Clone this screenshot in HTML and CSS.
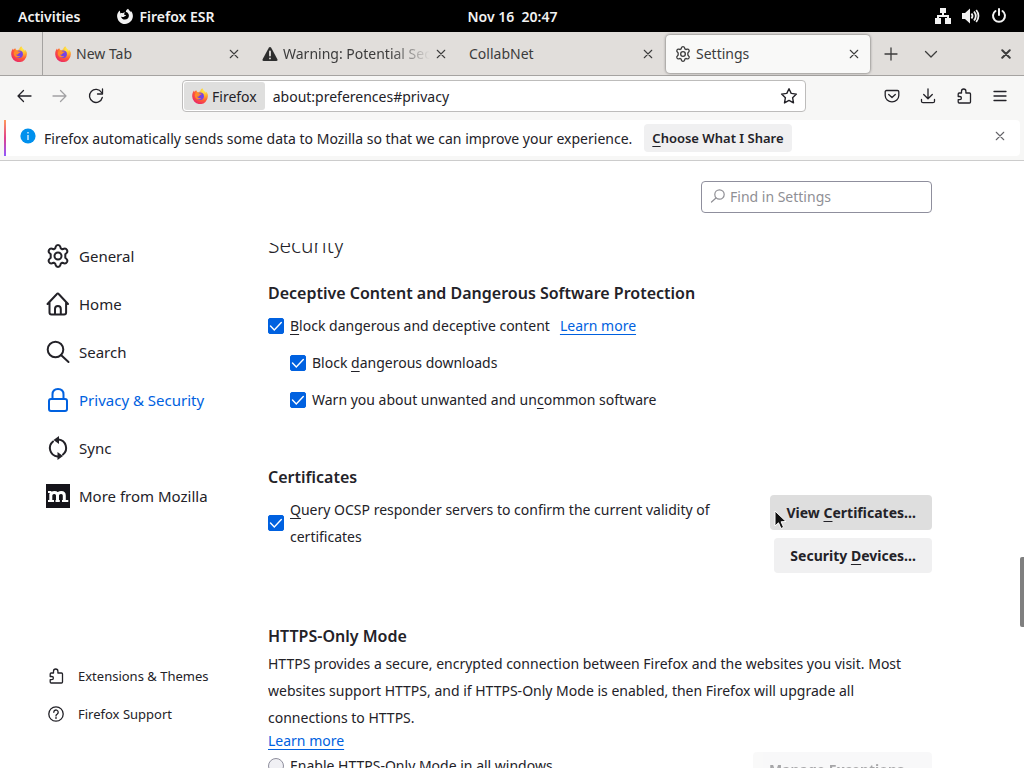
FILE: index.html
```
<!doctype html>
<html lang="en">
  <head>
    <title>Settings</title>
    <meta charset="utf-8">
    <link rel="stylesheet" href="styles.css">
  </head>

  <body>
    <!-- shared icons -->
    <svg class="defs" width="0" height="0" aria-hidden="true">
      <defs>
        <radialGradient id="flame" cx="75%" cy="15%" r="95%">
          <stop offset="0" stop-color="#fff04a"/>
          <stop offset="0.35" stop-color="#ffb32e"/>
          <stop offset="0.65" stop-color="#ff5a36"/>
          <stop offset="1" stop-color="#e8246b"/>
        </radialGradient>
        <symbol id="firefox" viewBox="0 0 16 16">
          <path fill="url(#flame)" d="M15.7 6.3c-.4-1.3-1.2-2.5-2.2-2.9.5.9.7 1.6.8 2.2C13.300 3.500 11.400 2.400 10.300.2c-1.300.8-2 2-2.100 3.300-.8.1-1.500.3-2.100.7-.8-.2-1.500-1-1.800-2-1 .5-1.500 1.200-2 1.900l-.3-1.500C.8 3.900.2 6.200.2 8.200a7.800 7.800 0 0 0 15.600.2c.1-.7 0-1.400-.1-2.100z"/>
          <circle cx="8.200" cy="8.300" r="3.700" fill="#7542e5"/>
          <path fill="#ff8a2b" d="M3.400 5.400c1.300-1 3-.8 4.200.1l2.200.3c-.1.800-1 1-1.700 1.200-.6.300-.7.700-1 1.200-.5.600-1.500.5-2 .3.600 1.500 2.300 2 4.100 1.400-1.200 2.500-5.900 1.700-6.400-1.900-.1-1 .1-1.900.6-2.600z"/>
        </symbol>
        <symbol id="close" viewBox="0 0 12 12">
          <path d="M1.500 1.500l9 9M10.500 1.500l-9 9"/>
        </symbol>
        <symbol id="gear" viewBox="0 0 24 24">
          <path d="M9.600 2.900C10 1.400 10.800 1 12 1s2 .4 2.400 1.900l.4 1.500 1.500.9 1.700-.6c1.500-.4 2.300.1 3 1.300.6 1.200.6 2.100-.5 3.100L19.300 10.300v3.400l1.200 1.200c1.100 1 1.100 1.900.5 3.100-.7 1.200-1.500 1.700-3 1.300l-1.700-.6-1.500.9-.4 1.500C14 22.600 13.200 23 12 23s-2-.4-2.400-1.900l-.4-1.500-1.500-.9-1.700.6c-1.500.4-2.300-.1-3-1.300-.6-1.200-.6-2.100.5-3.100l1.200-1.200v-3.400L3.500 9.100C2.400 8.100 2.400 7.200 3 6c.7-1.200 1.500-1.700 3-1.300l1.700.6 1.500-.9z"/>
          <circle cx="12" cy="12" r="3.500"/>
        </symbol>
        <symbol id="puzzle" viewBox="0 0 16 16">
          <path d="M2.200 8V6c0-.6.400-1 1-1h2.300V3.200a2.200 2.200 0 0 1 4.400 0V5h3.600c.6 0 1 .4 1 1v8c0 .6-.4 1-1 1H3.200c-.6 0-1-.4-1-1v-2.300h1.600a1.600 1.600 0 0 0 0-3.200H2.200z"/>
        </symbol>
      </defs>
    </svg>

    <header class="topbar">
      <div class="topbar-left">
        <span>Activities</span>
        <span class="app-name">
          <svg width="16" height="16" viewBox="0 0 16 16"><path fill="#f2f2f2" d="M14.900 4.300l-1.200-1.500.2 1.500L11 .7C9.500 1.500 8.700 2.700 8.900 4c1.600.2 3 1.600 3 3.700 0 2.300-1.700 3.900-3.900 3.900-2.100 0-3.700-1.300-4-3.200 1.100.8 2.400.8 3.300.1.500-.5 1-.6 1.600-.6 0-1-.8-1.400-2-1.500.2-.9.700-1.400 1.400-1.800-1.200-.2-2.100 0-2.800.6-.7-.2-1.500-.1-2.100.2L2.800 2.400C.9 4 0 6 .1 8.200.3 12.600 3.700 16 8 16s7.900-3.500 7.900-7.900c0-1.400-.4-2.700-1-3.800z"/></svg>
          Firefox ESR
        </span>
      </div>
      <span class="clock">Nov 16&nbsp; 20:47</span>
      <div class="topbar-right">
        <svg width="16" height="16" viewBox="0 0 16 16" fill="#f2f2f2"><path d="M5 0h6v5H9v2h5v3h2v6h-6v-6h2V9H4v1h2v6H0v-6h2V7h5V5H5z"/></svg>
        <svg width="18" height="16" viewBox="0 0 18 16"><path fill="#f2f2f2" d="M0 5h3l5-4.500v15L3 11H0z"/><path fill="none" stroke="#f2f2f2" stroke-width="1.800" d="M9.500 5.500c1.200 1.500 1.200 3.500 0 5M12 3.500c2.200 2.700 2.200 6.300 0 9M14.200 2c3 3.500 3 8.500 0 12"/></svg>
        <svg width="16" height="16" viewBox="0 0 16 16" fill="none" stroke="#f2f2f2" stroke-width="2" stroke-linecap="round"><path d="M8 1v6M4.500 3a6 6 0 1 0 7 0"/></svg>
      </div>
    </header>

    <div class="tabbar">
      <div class="pinned"><svg width="16" height="16"><use href="#firefox"/></svg></div>
      <div class="tab">
        <svg width="16" height="16"><use href="#firefox"/></svg>
        <span class="tab-title">New Tab</span>
        <button class="tab-close" aria-label="Close tab"><svg class="line" width="10" height="10"><use href="#close"/></svg></button>
      </div>
      <div class="tab">
        <svg width="16" height="16" viewBox="0 0 16 16"><path fill="#2e2e2e" d="M8 1c.5 0 .9.300 1.200.8l6.200 11.500c.5 1-.1 1.700-1 1.700H1.600c-.9 0-1.500-.7-1-1.700L6.800 1.800C7.100 1.300 7.500 1 8 1z"/><path stroke="#e2dfdc" stroke-width="1.800" stroke-linecap="round" d="M8 5.500v4M8 12.300v.1"/></svg>
        <span class="tab-title fade">Warning: Potential Secu</span>
        <button class="tab-close" aria-label="Close tab"><svg class="line" width="10" height="10"><use href="#close"/></svg></button>
      </div>
      <div class="tab">
        <span class="tab-title">CollabNet</span>
        <button class="tab-close" aria-label="Close tab"><svg class="line" width="10" height="10"><use href="#close"/></svg></button>
      </div>
      <div class="tab active">
        <svg class="line bold" width="16" height="16"><use href="#gear"/></svg>
        <span class="tab-title">Settings</span>
        <button class="tab-close" aria-label="Close tab"><svg class="line" width="10" height="10"><use href="#close"/></svg></button>
      </div>
      <div class="tab-tools">
        <button class="tool" aria-label="New tab"><svg class="line" width="14" height="14" viewBox="0 0 14 14"><path d="M7 1v12M1 7h12"/></svg></button>
        <button class="tool" aria-label="List all tabs"><svg class="line" width="14" height="14" viewBox="0 0 14 14"><path d="M1.500 4.500L7 10l5.500-5.500"/></svg></button>
      </div>
      <button class="window-close" aria-label="Close window"><svg class="line heavy" width="10" height="10"><use href="#close"/></svg></button>
    </div>

    <div class="navbar">
      <div class="nav-buttons">
        <button class="tool" aria-label="Back"><svg class="line" width="16" height="16" viewBox="0 0 16 16"><path d="M15 8H2M7.500 2.500L2 8l5.500 5.500"/></svg></button>
        <button class="tool" aria-label="Forward" disabled><svg class="line" width="16" height="16" viewBox="0 0 16 16"><path d="M1 8h13M8.500 2.500L14 8l-5.500 5.500"/></svg></button>
        <button class="tool" aria-label="Reload"><svg class="line" width="16" height="16" viewBox="0 0 16 16"><path d="M14.300 9.500A6.500 6.500 0 1 1 13.500 4.500M14.500 1v5h-5"/></svg></button>
      </div>
      <div class="urlbar">
        <span class="identity"><svg width="16" height="16"><use href="#firefox"/></svg>Firefox</span>
        <input class="url" type="text" aria-label="Address" value="about:preferences#privacy">
        <button class="star" aria-label="Bookmark this page"><svg class="line" width="18" height="18" viewBox="0 0 18 18"><path stroke-width="1.400" d="M9 1.700l2.200 4.700 5.200.7-3.800 3.600.9 5.200L9 13.400l-4.500 2.500.9-5.200L1.600 7.100l5.200-.7z"/></svg></button>
      </div>
      <div class="nav-tools">
        <button class="tool" aria-label="Pocket"><svg class="line" width="16" height="16" viewBox="0 0 16 16"><path d="M2.500 2.500h11c.8 0 1.300.5 1.300 1.300V7.500a6.800 6.300 0 0 1-13.600 0V3.800c0-.8.5-1.300 1.300-1.300zM4.700 6.500L8 9.500l3.300-3"/></svg></button>
        <button class="tool" aria-label="Downloads"><svg class="line" width="16" height="16" viewBox="0 0 16 16"><path d="M8 .8v9.700M3.700 6.500L8 10.700l4.300-4.200M1.500 11.500v1.700c0 1 .6 1.500 1.500 1.500h10c.9 0 1.500-.5 1.500-1.500v-1.700"/></svg></button>
        <button class="tool" aria-label="Extensions"><svg class="line" width="16" height="16"><use href="#puzzle"/></svg></button>
        <button class="tool" aria-label="Menu"><svg class="line" width="16" height="16" viewBox="0 0 16 16"><path d="M2 3.500h12M2 8h12M2 12.500h12"/></svg></button>
      </div>
    </div>

    <div class="notice-wrap">
      <div class="notice">
        <svg class="info" width="16" height="16" viewBox="0 0 16 16"><circle cx="8" cy="8" r="7.600" fill="#0090ed"/><path stroke="#fff" stroke-width="1.200" d="M8 7v5M8 4v1.500"/></svg>
        <span class="notice-text">Firefox automatically sends some data to Mozilla so that we can improve your experience.</span>
        <button class="notice-button"><u>C</u>hoose What I Share</button>
        <button class="notice-close" aria-label="Close"><svg class="line" width="10" height="10"><use href="#close"/></svg></button>
      </div>
    </div>

    <div class="page">
      <nav class="sidebar">
        <a href="#general" class="category"><svg class="line" width="24" height="24"><use href="#gear"/></svg>General</a>
        <a href="#home" class="category"><svg class="line" width="24" height="24" viewBox="0 0 24 24"><path d="M1.500 12L10.700 2.200c.7-.8 1.500-.8 2.200 0L22 12M3.500 10v10.500c0 1.200.7 2 2 2h12.600c1.300 0 2-.8 2-2V10M9 22.500V17c0-2 1-3 2.900-3s2.900 1 2.900 3v5.500"/></svg>Home</a>
        <a href="#search" class="category"><svg class="line" width="24" height="24" viewBox="0 0 24 24"><circle cx="9.500" cy="9.500" r="7.800"/><path d="M15 15l7.500 7"/></svg>Search</a>
        <a href="#privacy" class="category selected"><svg class="line" width="24" height="24" viewBox="0 0 24 24"><rect x="3" y="11" width="18" height="12" rx="2"/><path d="M6.500 11V6.500c0-3.500 2-5.500 5.500-5.500s5.500 2 5.500 5.500V11"/></svg>Privacy &amp; Security</a>
        <a href="#sync" class="category"><svg class="line" width="24" height="24" viewBox="0 0 24 24"><path d="M12.500 3.500A8.500 8.500 0 0 1 17 18.500M11.500 20.500A8.500 8.500 0 0 1 7 5.500"/><path fill="currentColor" stroke="none" d="M13 0v8L7.500 4zM11.500 16v8l5.500-4z"/></svg>Sync</a>
        <a href="#mozilla" class="category"><svg width="24" height="24" viewBox="0 0 24 24"><path fill="#15141a" d="M0 0h24v24H0z"/><path fill="none" stroke="#fff" stroke-width="3" d="M4.800 17V9.500M4.800 11c1-3.200 6.700-3.700 6.700.5V17M11.500 11c1-3.200 6.800-3.700 6.800.5V17"/><path stroke="#fff" stroke-width="1.800" d="M2 8h3.500M2 17h6M9.500 17h4.300M16 17h6.300"/></svg>More from Mozilla</a>

        <div class="sidebar-footer">
          <a href="#addons" class="footer-link"><svg class="line" width="16" height="16"><use href="#puzzle"/></svg>Extensions &amp; Themes</a>
          <a href="#support" class="footer-link"><svg class="line" width="16" height="16" viewBox="0 0 16 16"><circle cx="8" cy="8" r="7.200"/><path d="M5.800 6.300a2.200 2.200 0 1 1 3.500 1.700C8.400 8.600 8 8.900 8 9.700M8 11.200v1.200"/></svg>Firefox Support</a>
        </div>
      </nav>

      <main class="main">
        <div class="search-row">
          <label class="search-box">
            <svg width="16" height="16" viewBox="0 0 16 16" fill="none" stroke="#8f8f95" stroke-width="1.200" stroke-linecap="round"><circle cx="9.500" cy="6.500" r="4.700"/><path d="M6 10l-4.500 4"/></svg>
            <input type="text" placeholder="Find in Settings" aria-label="Find in Settings">
          </label>
        </div>

        <div class="pane">
          <h1>Security</h1>

          <section>
            <h2>Deceptive Content and Dangerous Software Protection</h2>
            <div class="check-row">
              <label class="check"><input type="checkbox" checked><span><u>B</u>lock dangerous and deceptive content</span></label>
              <a href="#learn-phishing">Learn more</a>
            </div>
            <div class="check-row indent">
              <label class="check"><input type="checkbox" checked><span>Block <u>d</u>angerous downloads</span></label>
            </div>
            <div class="check-row indent">
              <label class="check"><input type="checkbox" checked><span>Warn you about unwanted and un<u>c</u>ommon software</span></label>
            </div>
          </section>

          <section class="certificates">
            <h2>Certificates</h2>
            <div class="cert-row">
              <label class="check"><input type="checkbox" checked><span><u>Q</u>uery OCSP responder servers to confirm the current validity of certificates</span></label>
              <div class="cert-buttons">
                <button class="button hovered">View <u>C</u>ertificates…</button>
                <button class="button">Security <u>D</u>evices…</button>
              </div>
            </div>
          </section>

          <section class="https">
            <h2>HTTPS-Only Mode</h2>
            <p>HTTPS provides a secure, encrypted connection between Firefox and the websites you visit. Most websites support HTTPS, and if HTTPS-Only Mode is enabled, then Firefox will upgrade all connections to HTTPS.</p>
            <a href="#learn-https">Learn more</a>
            <div class="mode-row">
              <label class="check"><input type="radio" name="https-mode"><span>Enable HTTPS-Only Mode in all windows</span></label>
              <button class="button" disabled>Manage Exceptions…</button>
            </div>
          </section>
        </div>
      </main>
      <div class="scroll-thumb"></div>
    </div>

    <svg class="pointer" width="14" height="20" viewBox="0 0 14 20"><path fill="#111" stroke="#fff" d="M1 1v15l3.500-3.200 2.500 5.700 2.600-1.200-2.500-5.500 4.900-.3z"/></svg>
  </body>
</html>
```
FILE: styles.css
```
*{
  box-sizing: border-box;
  margin: 0;
  padding: 0;
}

body{
  height: 100vh;
  display: flex;
  flex-direction: column;
  overflow: hidden;
  position: relative;
  font-family: "Noto Sans", sans-serif;
  font-size: 14px;
  color: #232228;
  background-color: white;
}

button, input{
  font: inherit;
  color: inherit;
}

button{
  border: none;
  background: none;
}

svg{
  flex: none;
}

.defs{
  position: absolute;
}

.line{
  fill: none;
  stroke: currentColor;
  stroke-width: 1.3;
  stroke-linecap: round;
  stroke-linejoin: round;
}

.line.bold,
.category .line{
  stroke-width: 2;
}

.line.heavy{
  stroke-width: 2.4;
}

/* desktop bar */
.topbar{
  height: 32px;
  flex: none;
  display: grid;
  grid-template-columns: 1fr auto 1fr;
  align-items: center;
  padding: 0 17px 0 18px;
  background-color: black;
  color: #f2f2f2;
  font-weight: 600;
}

.topbar-left, .topbar-right, .app-name{
  display: flex;
  align-items: center;
}

.topbar-left{
  gap: 37px;
}

.app-name{
  gap: 6px;
}

.topbar-right{
  justify-content: flex-end;
  gap: 11px;
}

/* tabs */
.tabbar{
  height: 44px;
  flex: none;
  display: flex;
  align-items: center;
  background-color: #e1dedb;
  border-bottom: 1px solid #a5a3a1;
  color: #3c3c3c;
}

.pinned{
  width: 43px;
  height: 100%;
  padding-left: 11px;
  display: flex;
  align-items: center;
  border-right: 1px solid #a5a3a1;
}

.tab{
  flex: 0 1 207px;
  min-width: 0;
  height: 38px;
  padding: 0 11px 0 12px;
  display: flex;
  align-items: center;
  gap: 5px;
}

.tab.active{
  flex-basis: 204px;
  margin: 0 2px;
  padding: 0 11px 0 9px;
  background-color: #f9f9f8;
  border-radius: 4px;
  box-shadow: 0 0 3px rgba(0,0,0,0.6);
}

.tab-title{
  flex: 1;
  overflow: hidden;
  white-space: nowrap;
}

.tab-title.fade{
  -webkit-mask-image: linear-gradient(to left, transparent, black 40px);
  mask-image: linear-gradient(to left, transparent, black 40px);
}

.tab-close{
  width: 11px;
  height: 20px;
  display: flex;
  align-items: center;
  justify-content: center;
}

.tab-tools{
  display: flex;
  gap: 8px;
  padding-left: 3px;
}

.tool{
  width: 32px;
  height: 32px;
  display: flex;
  align-items: center;
  justify-content: center;
}

.tool:disabled{
  opacity: 0.4;
}

.window-close{
  margin-left: auto;
  margin-right: 13px;
  display: flex;
}

/* address bar */
.navbar{
  height: 44px;
  flex: none;
  display: flex;
  align-items: center;
  justify-content: space-between;
  padding: 0 8px 4px;
  background-color: #f7f7f6;
}

.nav-buttons, .nav-tools{
  display: flex;
  gap: 4px;
}

.urlbar{
  flex: 0 1 624px;
  height: 32px;
  padding: 1px;
  display: flex;
  align-items: center;
  background-color: white;
  border: 1px solid #bdbcbb;
  border-radius: 4px;
}

.identity{
  height: 100%;
  padding: 0 8px;
  display: flex;
  align-items: center;
  gap: 4px;
  background-color: #dfdfde;
  border-radius: 3px;
}

.url{
  flex: 1;
  min-width: 0;
  padding-left: 8px;
  border: none;
  outline: none;
}

.star{
  padding: 0 6px;
  display: flex;
}

/* data sharing notice */
.notice-wrap{
  flex: none;
  padding: 0 4px 4px;
  background-color: #f7f7f6;
  border-bottom: 1px solid #ccc;
}

.notice{
  min-height: 36px;
  display: flex;
  align-items: center;
  padding: 0 15px 0 16px;
  background: linear-gradient(#ff9a5a, #e0408c, #9059ff) left / 2px 100% no-repeat white;
  border-radius: 0 4px 4px 0;
}

.info{
  margin-bottom: 4px;
}

.notice-text{
  padding: 0 12px 0 8px;
}

.notice-button{
  padding: 4px 8px;
  background-color: #f0f0f1;
  border-radius: 4px;
  font-size: 13px;
  line-height: 20px;
  font-weight: 600;
}

.notice-close{
  margin-left: auto;
  margin-bottom: 4px;
  display: flex;
  opacity: 0.7;
}

/* settings page */
.page{
  flex: 1;
  min-height: 0;
  display: flex;
  position: relative;
}

a{
  color: #0061e0;
  text-underline-offset: 3px;
}

u{
  text-underline-offset: 3px;
}

.sidebar{
  flex: none;
  width: 268px;
  padding: 71px 0 35px 46px;
  display: flex;
  flex-direction: column;
}

.category{
  height: 48px;
  display: flex;
  align-items: center;
  gap: 9px;
  font-size: 15px;
  color: #232228;
  text-decoration: none;
}

.category.selected{
  color: #0061e0;
}

.sidebar-footer{
  margin-top: auto;
  padding-left: 2px;
}

.footer-link{
  height: 38px;
  display: flex;
  align-items: center;
  gap: 14px;
  font-size: 13px;
  color: #232228;
  text-decoration: none;
}

.main{
  flex: 0 1 664px;
  min-width: 0;
  display: flex;
  flex-direction: column;
}

.search-row{
  flex: none;
  display: flex;
  justify-content: flex-end;
  padding: 20px 0 30px;
}

.search-box{
  width: 231px;
  height: 32px;
  padding: 0 8px 2px;
  display: flex;
  align-items: center;
  gap: 4px;
  border: 1px solid #8f8f9d;
  border-radius: 4px;
}

.search-box input{
  flex: 1;
  min-width: 0;
  border: none;
  outline: none;
  background: none;
}

.search-box input::placeholder{
  color: #8f8f95;
}

.pane{
  flex: 1;
  min-height: 0;
  overflow: hidden;
}

/* the pane is scrolled partway past this heading */
h1{
  margin-top: -14px;
  margin-bottom: 20px;
  font-size: 21px;
  line-height: 32px;
  font-weight: 300;
}

h2{
  font-size: 16px;
  line-height: 24px;
  font-weight: 600;
}

.check-row{
  margin-top: 7px;
  display: flex;
  align-items: center;
  gap: 10px;
}

.check-row.indent{
  margin-top: 10px;
  padding-left: 22px;
}

.check{
  display: flex;
  align-items: center;
  gap: 6px;
  line-height: 27px;
}

.check input{
  flex: none;
  width: 16px;
  height: 16px;
  appearance: none;
  border: 1px solid #8f8f9d;
  background-color: #f0f0f4;
}

.check input[type="checkbox"]{
  border-radius: 2px;
}

.check input[type="radio"]{
  border-radius: 50%;
}

.check input:checked{
  border-color: #0061e0;
  background: url("data:image/svg+xml,%3Csvg xmlns='http://www.w3.org/2000/svg' viewBox='0 0 14 14'%3E%3Cpath fill='none' stroke='white' stroke-width='1.4' stroke-linecap='round' d='M1.500 7l3.800 4 7-7.500'/%3E%3C/svg%3E") #0061e0;
}

.certificates{
  margin-top: 52px;
}

.cert-row{
  margin-top: 6px;
  display: flex;
  justify-content: space-between;
}

.cert-row .check{
  flex: 0 1 460px;
  align-self: flex-start;
  padding-top: 1px;
}

.cert-buttons{
  display: flex;
  flex-direction: column;
  align-items: flex-end;
  gap: 8px;
}

.button{
  padding: 4px 16px;
  line-height: 27px;
  font-weight: 700;
  background-color: #f0f0f1;
  border-radius: 4px;
}

.button.hovered{
  background-color: #dedede;
}

.button:disabled{
  opacity: 0.4;
}

.https{
  margin-top: 51px;
}

.https p{
  padding-top: 2px;
  line-height: 27px;
}

.https > a{
  display: block;
  line-height: 20px;
}

.mode-row{
  margin-top: 1px;
  display: flex;
  align-items: flex-start;
  justify-content: space-between;
}

.scroll-thumb{
  position: absolute;
  right: 0;
  top: 396px;
  width: 4px;
  height: 70px;
  background-color: #7f7f7f;
  border-radius: 2px 0 0 2px;
}

.pointer{
  position: absolute;
  left: 774px;
  top: 510px;
}
```
